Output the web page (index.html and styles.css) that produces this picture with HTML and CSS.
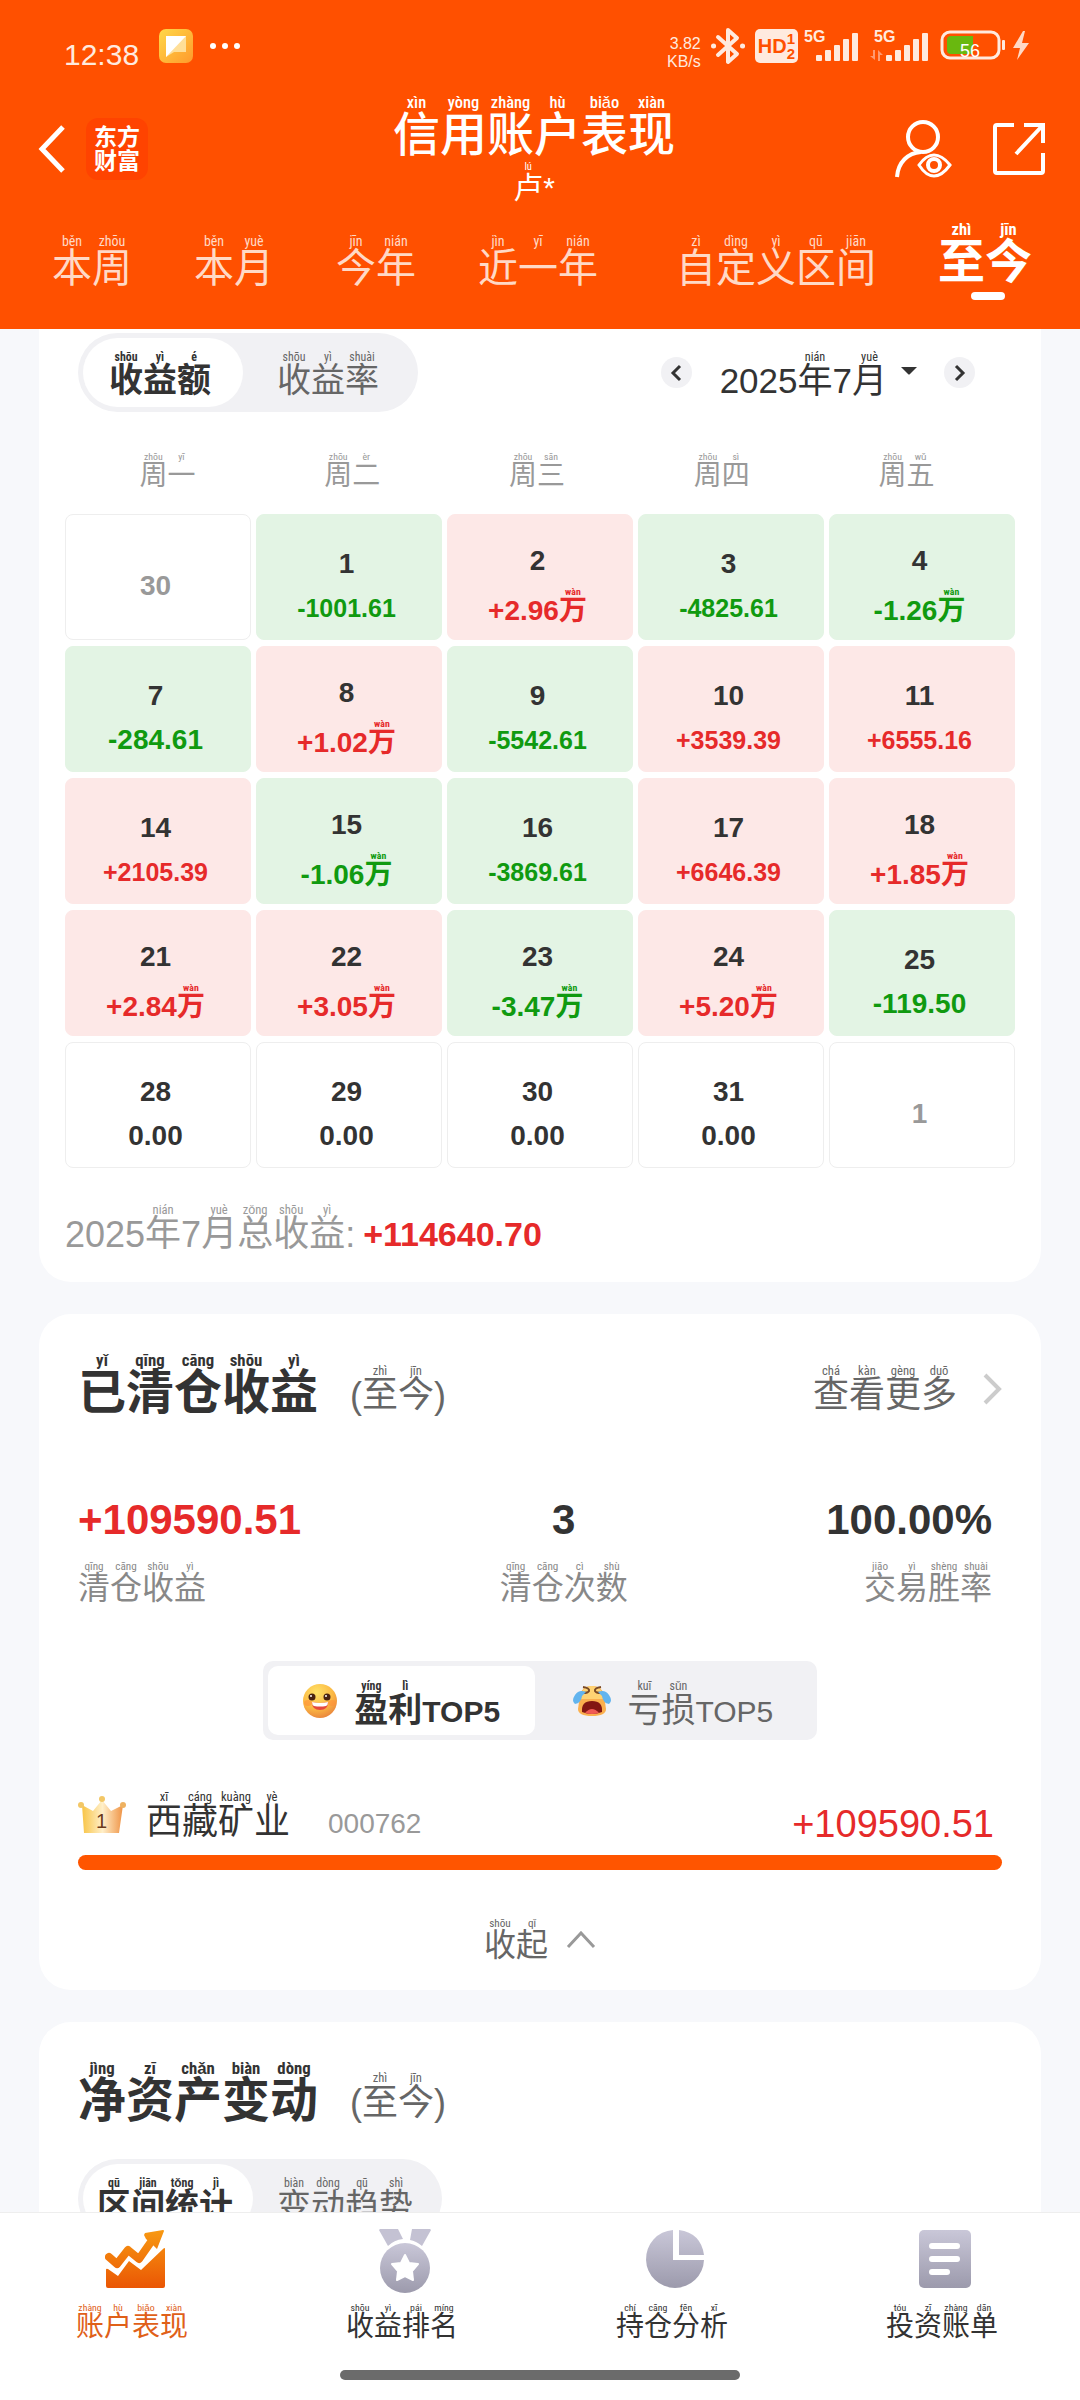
FILE: index.html
```html
<!DOCTYPE html>
<html lang="zh-CN">
<head>
  <meta charset="UTF-8" />
  <meta name="viewport" content="width=device-width, initial-scale=1.0"/>
  <title>信用账户表现</title>
  <link rel="stylesheet" href="styles.css">
</head>
<body>
  <header>
    <div class="status">
      <span class="time">12:38</span>
      <svg class="app-icon" width="34" height="34" viewBox="0 0 34 34">
        <defs><linearGradient id="note" x1="0" y1="0" x2="1" y2="1"><stop offset="0" stop-color="#ffd848"/><stop offset="1" stop-color="#ff9a2c"/></linearGradient></defs>
        <rect width="34" height="34" rx="7" fill="url(#note)"/>
        <path d="M7 7h20v16H15l-8 5z" fill="#ffdf98"/>
        <path d="M7 7h20L7 28z" fill="#fff"/>
      </svg>
      <svg class="dots" width="32" height="8" viewBox="0 0 32 8"><g fill="#fff"><circle cx="4" cy="4" r="3"/><circle cx="16" cy="4" r="3"/><circle cx="28" cy="4" r="3"/></g></svg>
      <span class="speed">3.82<br>KB/s</span>
      <svg width="34" height="38" viewBox="0 0 34 38" fill="none" stroke="#ffeadf" stroke-width="4" stroke-linejoin="round" stroke-linecap="round"><path d="M7 10l19 17-9 8V3l9 8L7 28"/><path d="M2.500 19h.1M31.500 19h.1" stroke-width="5"/></svg>
      <span class="hd">HD<small>1<br>2</small></span>
      <svg width="54" height="34" viewBox="0 0 54 34" fill="#ffeadf"><text x="0" y="13" class="net">5G</text><rect x="12" y="26" width="6" height="6" rx="1"/><rect x="21" y="21" width="6" height="11" rx="1"/><rect x="30" y="16" width="6" height="16" rx="1"/><rect x="39" y="10" width="6" height="22" rx="1"/><rect x="48" y="4" width="6" height="28" rx="1"/></svg>
      <svg class="sim2" width="58" height="34" viewBox="0 0 58 34" fill="#ffeadf"><text x="4" y="13" class="net">5G</text><path d="M0 27h3v-6h2v10zM8 21l5 5h-3v6H8z" fill="#ff9a70"/><rect x="16" y="26" width="6" height="6" rx="1"/><rect x="25" y="21" width="6" height="11" rx="1"/><rect x="34" y="16" width="6" height="16" rx="1"/><rect x="43" y="10" width="6" height="22" rx="1"/><rect x="52" y="4" width="6" height="28" rx="1"/></svg>
      <svg width="90" height="32" viewBox="0 0 90 32">
        <rect x="2" y="2" width="57" height="26" rx="8" fill="none" stroke="#ffeadf" stroke-width="3"/>
        <path d="M7 10q0-4 4-4h22v18H11q-4 0-4-4z" fill="#69b80f"/>
        <rect x="62" y="10" width="3" height="10" rx="1" fill="#ffeadf"/>
        <text x="20" y="27" class="level">56</text>
        <path d="M83 1L73 18h7l-3 12 12-17h-7l3-12z" fill="#ffd9c6"/>
      </svg>
    </div>

    <div class="app-bar">
      <div class="bar-left">
        <button class="icon-btn" aria-label="返回"><svg width="28" height="48" viewBox="0 0 28 48" fill="none" stroke="#fff" stroke-width="5"><path d="M25 2L4 24l21 22"/></svg></button>
        <span class="logo">东方财富</span>
      </div>
      <div class="bar-title">
        <h1><ruby>信<rt>xìn</rt></ruby><ruby>用<rt>yòng</rt></ruby><ruby>账<rt>zhàng</rt></ruby><ruby>户<rt>hù</rt></ruby><ruby>表<rt>biǎo</rt></ruby><ruby>现<rt>xiàn</rt></ruby></h1>
        <p><ruby>卢<rt>lú</rt></ruby>*</p>
      </div>
      <div class="bar-right">
        <button class="icon-btn" aria-label="查看账户"><svg width="58" height="58" viewBox="0 0 58 58" fill="none" stroke="#fff" stroke-width="4"><circle cx="29" cy="17" r="15"/><path d="M3 57C4 42 14 33 27 32"/><path d="M25 45q7-10 15-10t16 10q-8 11-16 11T25 45z" stroke-width="3"/><circle cx="40" cy="45" r="6"/></svg></button>
        <button class="icon-btn" aria-label="分享"><svg width="54" height="54" viewBox="0 0 54 54" fill="none" stroke="#fff" stroke-width="4"><path d="M22 3H5q-2 0-2 2v44q0 2 2 2h44q2 0 2-2V31"/><path d="M32 3h19v18M51 3L24 32"/></svg></button>
      </div>
    </div>

    <nav class="tabs">
      <a href="#"><ruby>本<rt>běn</rt></ruby><ruby>周<rt>zhōu</rt></ruby></a>
      <a href="#"><ruby>本<rt>běn</rt></ruby><ruby>月<rt>yuè</rt></ruby></a>
      <a href="#"><ruby>今<rt>jīn</rt></ruby><ruby>年<rt>nián</rt></ruby></a>
      <a href="#"><ruby>近<rt>jìn</rt></ruby><ruby>一<rt>yī</rt></ruby><ruby>年<rt>nián</rt></ruby></a>
      <a href="#" class="range"><ruby>自<rt>zì</rt></ruby><ruby>定<rt>dìng</rt></ruby><ruby>义<rt>yì</rt></ruby><ruby>区<rt>qū</rt></ruby><ruby>间<rt>jiān</rt></ruby></a>
      <a href="#" class="active"><ruby>至<rt>zhì</rt></ruby><ruby>今<rt>jīn</rt></ruby></a>
    </nav>
  </header>

  <main>
    <section class="card calendar">
      <div class="calendar-top">
        <div class="segment">
          <button class="active"><ruby>收<rt>shōu</rt></ruby><ruby>益<rt>yì</rt></ruby><ruby>额<rt>é</rt></ruby></button>
          <button><ruby>收<rt>shōu</rt></ruby><ruby>益<rt>yì</rt></ruby><ruby>率<rt>shuài</rt></ruby></button>
        </div>
        <div class="month">
          <button class="round" aria-label="上个月"><svg width="12" height="18" viewBox="0 0 12 18" fill="none" stroke="#333" stroke-width="3"><path d="M10 2L3 9l7 7"/></svg></button>
          <button class="month-name">2025<ruby>年<rt>nián</rt></ruby>7<ruby>月<rt>yuè</rt></ruby><svg width="16" height="8" viewBox="0 0 16 8"><path d="M0 0h16L9 7q-1 1-2 0z" fill="#333"/></svg></button>
          <button class="round" aria-label="下个月"><svg width="12" height="18" viewBox="0 0 12 18" fill="none" stroke="#333" stroke-width="3"><path d="M2 2l7 7-7 7"/></svg></button>
        </div>
      </div>

      <div class="weekdays">
        <span><ruby>周<rt>zhōu</rt></ruby><ruby>一<rt>yī</rt></ruby></span>
        <span><ruby>周<rt>zhōu</rt></ruby><ruby>二<rt>èr</rt></ruby></span>
        <span><ruby>周<rt>zhōu</rt></ruby><ruby>三<rt>sān</rt></ruby></span>
        <span><ruby>周<rt>zhōu</rt></ruby><ruby>四<rt>sì</rt></ruby></span>
        <span><ruby>周<rt>zhōu</rt></ruby><ruby>五<rt>wǔ</rt></ruby></span>
      </div>

      <div class="days">
        <button class="day out"><b>30</b></button>
        <button class="day down"><b>1</b><span class="long">-1001.61</span></button>
        <button class="day up"><b>2</b><span>+2.96<ruby>万<rt>wàn</rt></ruby></span></button>
        <button class="day down"><b>3</b><span class="long">-4825.61</span></button>
        <button class="day down"><b>4</b><span>-1.26<ruby>万<rt>wàn</rt></ruby></span></button>

        <button class="day down"><b>7</b><span>-284.61</span></button>
        <button class="day up"><b>8</b><span>+1.02<ruby>万<rt>wàn</rt></ruby></span></button>
        <button class="day down"><b>9</b><span class="long">-5542.61</span></button>
        <button class="day up"><b>10</b><span class="long">+3539.39</span></button>
        <button class="day up"><b>11</b><span class="long">+6555.16</span></button>

        <button class="day up"><b>14</b><span class="long">+2105.39</span></button>
        <button class="day down"><b>15</b><span>-1.06<ruby>万<rt>wàn</rt></ruby></span></button>
        <button class="day down"><b>16</b><span class="long">-3869.61</span></button>
        <button class="day up"><b>17</b><span class="long">+6646.39</span></button>
        <button class="day up"><b>18</b><span>+1.85<ruby>万<rt>wàn</rt></ruby></span></button>

        <button class="day up"><b>21</b><span>+2.84<ruby>万<rt>wàn</rt></ruby></span></button>
        <button class="day up"><b>22</b><span>+3.05<ruby>万<rt>wàn</rt></ruby></span></button>
        <button class="day down"><b>23</b><span>-3.47<ruby>万<rt>wàn</rt></ruby></span></button>
        <button class="day up"><b>24</b><span>+5.20<ruby>万<rt>wàn</rt></ruby></span></button>
        <button class="day down"><b>25</b><span>-119.50</span></button>

        <button class="day"><b>28</b><span>0.00</span></button>
        <button class="day"><b>29</b><span>0.00</span></button>
        <button class="day"><b>30</b><span>0.00</span></button>
        <button class="day"><b>31</b><span>0.00</span></button>
        <button class="day out"><b>1</b></button>
      </div>

      <p class="total">2025<ruby>年<rt>nián</rt></ruby>7<ruby>月<rt>yuè</rt></ruby><ruby>总<rt>zǒng</rt></ruby><ruby>收<rt>shōu</rt></ruby><ruby>益<rt>yì</rt></ruby>:<strong>+114640.70</strong></p>
    </section>

    <section class="card">
      <div class="card-head">
        <h2><ruby>已<rt>yǐ</rt></ruby><ruby>清<rt>qīng</rt></ruby><ruby>仓<rt>cāng</rt></ruby><ruby>收<rt>shōu</rt></ruby><ruby>益<rt>yì</rt></ruby></h2>
        <span class="period">(<ruby>至<rt>zhì</rt></ruby><ruby>今<rt>jīn</rt></ruby>)</span>
        <a href="#" class="more"><ruby>查<rt>chá</rt></ruby><ruby>看<rt>kàn</rt></ruby><ruby>更<rt>gèng</rt></ruby><ruby>多<rt>duō</rt></ruby><svg width="19" height="32" viewBox="0 0 19 32" fill="none" stroke="#ccc" stroke-width="4"><path d="M2 2l14 14L2 30"/></svg></a>
      </div>

      <div class="stats">
        <div><strong class="red">+109590.51</strong><span><ruby>清<rt>qīng</rt></ruby><ruby>仓<rt>cāng</rt></ruby><ruby>收<rt>shōu</rt></ruby><ruby>益<rt>yì</rt></ruby></span></div>
        <div><strong>3</strong><span><ruby>清<rt>qīng</rt></ruby><ruby>仓<rt>cāng</rt></ruby><ruby>次<rt>cì</rt></ruby><ruby>数<rt>shù</rt></ruby></span></div>
        <div><strong>100.00%</strong><span><ruby>交<rt>jiāo</rt></ruby><ruby>易<rt>yì</rt></ruby><ruby>胜<rt>shèng</rt></ruby><ruby>率<rt>shuài</rt></ruby></span></div>
      </div>

      <div class="top5">
        <button class="active">
          <svg width="36" height="36" viewBox="0 0 36 36">
            <defs><radialGradient id="smile" cx=".4" cy=".25" r=".8"><stop offset="0" stop-color="#ffe267"/><stop offset=".6" stop-color="#fbb843"/><stop offset="1" stop-color="#e8813c"/></radialGradient></defs>
            <circle cx="18" cy="18" r="17" fill="url(#smile)"/>
            <ellipse cx="6" cy="20" rx="4" ry="3" fill="#ff9038" opacity=".6"/><ellipse cx="30" cy="20" rx="4" ry="3" fill="#ff9038" opacity=".6"/>
            <circle cx="10" cy="14" r="3.500" fill="#4a2310"/><circle cx="25" cy="14" r="3.500" fill="#4a2310"/><circle cx="9" cy="13" r="1" fill="#fff"/><circle cx="24" cy="13" r="1" fill="#fff"/>
            <path d="M10 19q8 2 16 0 0 8-8 8t-8-8z" fill="#e6493c"/><path d="M10 19q8 2 16 0 0 3-2 4-6 1-12 0-2-1-2-4z" fill="#fff"/>
          </svg>
          <span><ruby>盈<rt>yíng</rt></ruby><ruby>利<rt>lì</rt></ruby><small>TOP5</small></span>
        </button>
        <button>
          <svg width="38" height="36" viewBox="0 0 38 36">
            <path d="M7 12Q9 3 19 3t12 9l2 14q0 7-14 7T5 26z" fill="#fbb04e"/>
            <path d="M10 7q8-8 18 0l2 9H8z" fill="#ffd373"/>
            <path d="M9 29q-1-11 10-11t10 11q-10 4-20 0z" fill="#831713"/><path d="M12 30q7-8 14 0-7 2-14 0z" fill="#f05a54"/>
            <path d="M10 4q7 1 6 4-1 2-6 2M28 4q-7 1-6 4 1 2 6 2" fill="none" stroke="#7a4a26" stroke-width="2"/>
            <path d="M13 9Q6 6 2 12q-4 6 0 9 6-1 7-8zM25 9q7-3 11 3 4 6 0 9-6-1-7-8z" fill="#62b4ee"/>
          </svg>
          <span><ruby>亏<rt>kuī</rt></ruby><ruby>损<rt>sǔn</rt></ruby><small>TOP5</small></span>
        </button>
      </div>

      <div class="stock">
        <svg width="48" height="44" viewBox="0 0 48 44">
          <defs><linearGradient id="crown"><stop offset="0" stop-color="#f8c445"/><stop offset=".5" stop-color="#ffefc9"/><stop offset="1" stop-color="#ef9345"/></linearGradient></defs>
          <path d="M4 9l11 6 9-11 9 11 12-6-4 28H6z" fill="url(#crown)"/>
          <circle cx="3" cy="9" r="3" fill="#f3c766"/><circle cx="24" cy="3" r="3" fill="#f3c766"/><circle cx="45" cy="9" r="3" fill="#eeb160"/>
          <text x="18" y="32" class="rank">1</text>
        </svg>
        <span class="stock-name"><ruby>西<rt>xī</rt></ruby><ruby>藏<rt>cáng</rt></ruby><ruby>矿<rt>kuàng</rt></ruby><ruby>业<rt>yè</rt></ruby></span>
        <span class="code">000762</span>
        <span class="gain">+109590.51</span>
      </div>
      <div class="bar"></div>

      <button class="fold"><ruby>收<rt>shōu</rt></ruby><ruby>起<rt>qǐ</rt></ruby><svg width="30" height="18" viewBox="0 0 30 18" fill="none" stroke="#999" stroke-width="3"><path d="M2 16L15 2l13 14"/></svg></button>
    </section>

    <section class="card">
      <div class="card-head">
        <h2><ruby>净<rt>jìng</rt></ruby><ruby>资<rt>zī</rt></ruby><ruby>产<rt>chǎn</rt></ruby><ruby>变<rt>biàn</rt></ruby><ruby>动<rt>dòng</rt></ruby></h2>
        <span class="period">(<ruby>至<rt>zhì</rt></ruby><ruby>今<rt>jīn</rt></ruby>)</span>
      </div>
      <div class="segment four">
        <button class="active"><ruby>区<rt>qū</rt></ruby><ruby>间<rt>jiān</rt></ruby><ruby>统<rt>tǒng</rt></ruby><ruby>计<rt>jì</rt></ruby></button>
        <button><ruby>变<rt>biàn</rt></ruby><ruby>动<rt>dòng</rt></ruby><ruby>趋<rt>qū</rt></ruby><ruby>势<rt>shì</rt></ruby></button>
      </div>
    </section>
  </main>

  <footer>
    <nav class="bottom-nav">
      <a href="#" class="active">
        <svg width="60" height="60" viewBox="0 0 60 60">
          <defs><linearGradient id="hot" gradientUnits="userSpaceOnUse" x1="0" y1="0" x2="0" y2="60"><stop offset="0" stop-color="#f89a12"/><stop offset="1" stop-color="#ea5504"/></linearGradient></defs>
          <path d="M4 28l8 7 11-14 11 9 14-20" fill="none" stroke="url(#hot)" stroke-width="8" stroke-linejoin="round" stroke-linecap="round"/>
          <path d="M40 4l18-3q1 0 1 1l-7 18-5-5-6-5-2-4z" fill="url(#hot)"/>
          <path d="M58 20q2-2 2 0v37q0 2-2 2H3q-2 0-2-2V41q0-2 2-1l10 7 11-15 12 9z" fill="url(#hot)"/>
        </svg>
        <span><ruby>账<rt>zhàng</rt></ruby><ruby>户<rt>hù</rt></ruby><ruby>表<rt>biǎo</rt></ruby><ruby>现<rt>xiàn</rt></ruby></span>
      </a>
      <a href="#">
        <svg width="52" height="64" viewBox="0 0 52 64">
          <defs><linearGradient id="grey" x2="0" y2="1"><stop offset="0" stop-color="#c9c7d8"/><stop offset="1" stop-color="#9c9aac"/></linearGradient></defs>
          <path d="M1 0h18l5 10q-9 1-15 7L0 1zM33 0h18l1 1-9 16q-6-5-12-6z" fill="#c4c2d3"/>
          <circle cx="26" cy="39" r="25" fill="url(#grey)"/>
          <path d="M26 26l4 8 9 1-6 7 1 9-8-4-8 4 1-9-6-7 9-1z" fill="#fff" stroke="#fff" stroke-width="2" stroke-linejoin="round"/>
        </svg>
        <span><ruby>收<rt>shōu</rt></ruby><ruby>益<rt>yì</rt></ruby><ruby>排<rt>pái</rt></ruby><ruby>名<rt>míng</rt></ruby></span>
      </a>
      <a href="#">
        <svg width="60" height="60" viewBox="0 0 60 60"><path d="M28 1v30h31A29 29 0 1 1 28 1zM34 1q22 3 25 25H34z" fill="url(#grey)"/></svg>
        <span><ruby>持<rt>chí</rt></ruby><ruby>仓<rt>cāng</rt></ruby><ruby>分<rt>fēn</rt></ruby><ruby>析<rt>xī</rt></ruby></span>
      </a>
      <a href="#">
        <svg width="54" height="60" viewBox="0 0 54 60"><rect x="1" y="1" width="52" height="58" rx="5" fill="url(#grey)"/><path d="M14 17h25M14 30h25M14 43h15" stroke="#fff" stroke-width="6" stroke-linecap="round"/></svg>
        <span><ruby>投<rt>tóu</rt></ruby><ruby>资<rt>zī</rt></ruby><ruby>账<rt>zhàng</rt></ruby><ruby>单<rt>dān</rt></ruby></span>
      </a>
    </nav>
    <div class="home-bar"></div>
  </footer>
</body>
</html>
```
FILE: styles.css
```css
* {
  box-sizing: border-box;
}

body {
  margin: 0;
  height: 100vh;
  display: flex;
  flex-direction: column;
  font-family: "Liberation Sans", "Noto Sans CJK SC", sans-serif;
  line-height: 1;
  color: #333;
  background-color: #f7f8fb;
}

h1, h2, p {
  margin: 0;
}

a {
  color: inherit;
  text-decoration: none;
}

button {
  margin: 0;
  padding: 0;
  border: none;
  background: none;
  font: inherit;
  color: inherit;
  cursor: pointer;
}

svg {
  display: block;
  flex: none;
}

/* pinyin above each character */
ruby {
  display: inline-flex;
  flex-direction: column-reverse;
  align-items: center;
  width: 1em;
  line-height: 1;
  baseline-source: last;
}

rt {
  display: block;
  font-family: "Liberation Sans Narrow", "Roboto Condensed", Roboto, sans-serif;
  font-size: 0.35em;
  line-height: 1;
  white-space: nowrap;
}

/* header */
header {
  flex: none;
  background-color: #ff5000;
  color: white;
}

.status {
  display: flex;
  align-items: center;
  height: 92px;
  padding: 0 50px 0 64px;
  color: #ffeadf;
}

.time {
  font-size: 30px;
  margin: 18px 20px 0 0;
}

.dots {
  margin-left: 16px;
}

.speed {
  margin: 14px 10px 0 auto;
  font-size: 16px;
  line-height: 18px;
  text-align: right;
}

.hd {
  display: flex;
  align-items: center;
  height: 34px;
  margin: 0 6px 0 10px;
  padding: 0 3px;
  border-radius: 5px;
  background-color: #ffeadf;
  color: #ff5000;
  font-size: 20px;
  font-weight: bold;
}

.hd small {
  font-size: 15px;
}

.net {
  font-size: 16px;
  font-weight: bold;
}

.sim2 {
  margin: 0 12px;
}

.level {
  font-size: 18px;
  fill: #fff;
}

.app-bar {
  display: grid;
  grid-template-columns: 1fr auto 1fr;
  align-items: center;
  height: 114px;
  padding: 0 34px 0 22px;
}

.bar-left, .bar-right {
  display: flex;
  align-items: center;
}

.bar-left {
  gap: 20px;
  padding-left: 16px;
}

.bar-right {
  justify-content: flex-end;
  gap: 40px;
}

.logo {
  width: 62px;
  padding: 7px 8px;
  border-radius: 12px;
  background-color: #ff4300;
  font-size: 23px;
  font-weight: bold;
  line-height: 24px;
}

.bar-title {
  text-align: center;
}

h1 {
  font-size: 47px;
  font-weight: 500;
}

.bar-title p {
  font-size: 30px;
  margin-top: 4px;
}

.tabs {
  display: flex;
  align-items: flex-end;
  gap: 62px;
  height: 123px;
  padding: 0 50px 41px 52px;
  font-size: 40px;
  color: #ffd9c6;
  white-space: nowrap;
}

.tabs .range {
  margin-left: 16px;
}

.tabs .active {
  position: relative;
  margin-left: auto;
  padding-bottom: 3px;
  font-size: 47px;
  font-weight: bold;
  color: white;
}

.tabs .active::after {
  content: "";
  position: absolute;
  left: 50%;
  bottom: -12px;
  width: 34px;
  height: 8px;
  margin-left: -14px;
  border-radius: 4px;
  background-color: white;
}

/* content */
main {
  flex: 1;
  min-height: 0;
  overflow: hidden;
  padding: 0 39px;
}

.card {
  margin-bottom: 32px;
  padding: 38px 39px 29px;
  border-radius: 32px;
  background-color: white;
}

.calendar {
  padding: 4px 26px 30px;
  border-radius: 0 0 32px 32px;
}

.calendar-top {
  display: flex;
  justify-content: space-between;
  padding: 0 40px 0 13px;
}

.segment {
  display: flex;
  width: max-content;
  height: 79px;
  padding: 5px;
  border-radius: 40px;
  background-color: #f1f1f4;
  font-size: 34px;
  color: #666;
}

.segment button {
  padding: 4px 32px 0 26px;
  border-radius: 36px;
}

.segment button + button {
  padding: 4px 34px 0;
}

.segment .active, .top5 .active {
  background-color: white;
  color: #333;
  font-weight: bold;
}

.segment.four button {
  padding: 4px 20px 0 14px;
}

.segment.four button + button {
  padding: 4px 24px 0;
}

.month {
  display: flex;
  align-items: center;
}

.round {
  display: flex;
  align-items: center;
  justify-content: center;
  width: 31px;
  height: 31px;
  border-radius: 50%;
  background-color: #f1f1f4;
}

.month-name {
  margin: 0 27px 0 28px;
  padding-top: 4px;
  font-size: 35px;
}

.month-name svg {
  display: inline-block;
  margin-left: 14px;
  vertical-align: 18px;
}

.weekdays {
  display: grid;
  grid-template-columns: repeat(5, 1fr);
  margin-top: 40px;
  padding: 0 16px 0 10px;
  font-size: 28px;
  color: #999;
  text-align: center;
}

.days {
  display: grid;
  grid-template-columns: repeat(5, 1fr);
  gap: 6px 5px;
  margin-top: 24px;
}

.day {
  display: flex;
  flex-direction: column;
  align-items: center;
  justify-content: center;
  gap: 12px;
  height: 126px;
  padding: 23px 5px 0 0;
  border: 1px solid #eee;
  border-radius: 8px;
  font-size: 28px;
  font-weight: bold;
}

.day span {
  line-height: 36px;
}

.day .long {
  font-size: 25px;
}

.up {
  border-color: #fde8e7;
  background-color: #fde8e7;
}

.down {
  border-color: #e3f4e4;
  background-color: #e3f4e4;
}

.up span, .red {
  color: #e62a2a;
}

.down span {
  color: #109a10;
}

.out {
  padding-top: 18px;
  color: #999;
}

.total {
  margin-top: 36px;
  font-size: 36px;
  color: #999;
}

.total strong {
  margin-left: 8px;
  font-size: 34px;
  color: #e62a2a;
}

.card-head {
  display: flex;
  align-items: flex-end;
}

h2 {
  font-size: 48px;
}

.period, .more {
  padding-bottom: 4px;
  font-size: 36px;
  color: #666;
}

.period {
  margin-left: 32px;
}

.more {
  display: flex;
  align-items: center;
  margin-left: auto;
}

.more svg {
  margin-left: 26px;
}

.stats {
  display: flex;
  justify-content: space-between;
  margin-top: 82px;
  padding-right: 10px;
}

.stats div {
  display: flex;
  flex-direction: column;
  align-items: center;
  gap: 20px;
}

.stats div:first-child {
  align-items: flex-start;
}

.stats div:last-child {
  align-items: flex-end;
}

.stats strong {
  font-size: 42px;
}

.stats span {
  font-size: 32px;
  color: #888;
}

.top5 {
  display: grid;
  grid-template-columns: 49% 51%;
  width: 60%;
  height: 79px;
  margin: 57px auto 0;
  padding: 5px;
  border-radius: 10px;
  background-color: #f1f1f4;
  font-size: 34px;
  color: #666;
}

.top5 button {
  display: flex;
  align-items: center;
  justify-content: center;
  gap: 16px;
  border-radius: 10px;
}

.top5 span {
  padding-top: 6px;
}

.top5 small {
  font-size: 30px;
}

.stock {
  display: flex;
  align-items: flex-end;
  margin-top: 51px;
  font-size: 36px;
}

.rank {
  font-size: 20px;
  fill: #6b3a1a;
}

.stock-name {
  margin: 0 38px 0 20px;
}

.code {
  padding-bottom: 2px;
  font-size: 28px;
  color: #999;
}

.gain {
  margin-left: auto;
  padding-right: 8px;
  font-size: 38px;
  line-height: 32px;
  color: #e62a2a;
}

.bar {
  height: 15px;
  margin-top: 15px;
  border-radius: 8px;
  background-color: #ff5500;
}

.fold {
  display: flex;
  align-items: center;
  margin: 48px auto 0;
  font-size: 32px;
  color: #666;
}

.fold svg {
  margin-left: 18px;
}

.four {
  margin-top: 34px;
}

/* bottom navigation */
footer {
  flex: none;
  padding-bottom: 20px;
  border-top: 1px solid #eee;
  background-color: white;
}

.bottom-nav {
  display: grid;
  grid-template-columns: repeat(4, 1fr);
  padding-top: 16px;
}

.bottom-nav a {
  display: flex;
  flex-direction: column;
  align-items: center;
  justify-content: space-between;
  height: 112px;
  font-size: 28px;
}

.bottom-nav span {
  padding-right: 6px;
}

.bottom-nav .active {
  color: #e06018;
}

.home-bar {
  width: 37%;
  height: 10px;
  margin: 29px auto 0;
  border-radius: 5px;
  background-color: #6b6b6b;
}
```
